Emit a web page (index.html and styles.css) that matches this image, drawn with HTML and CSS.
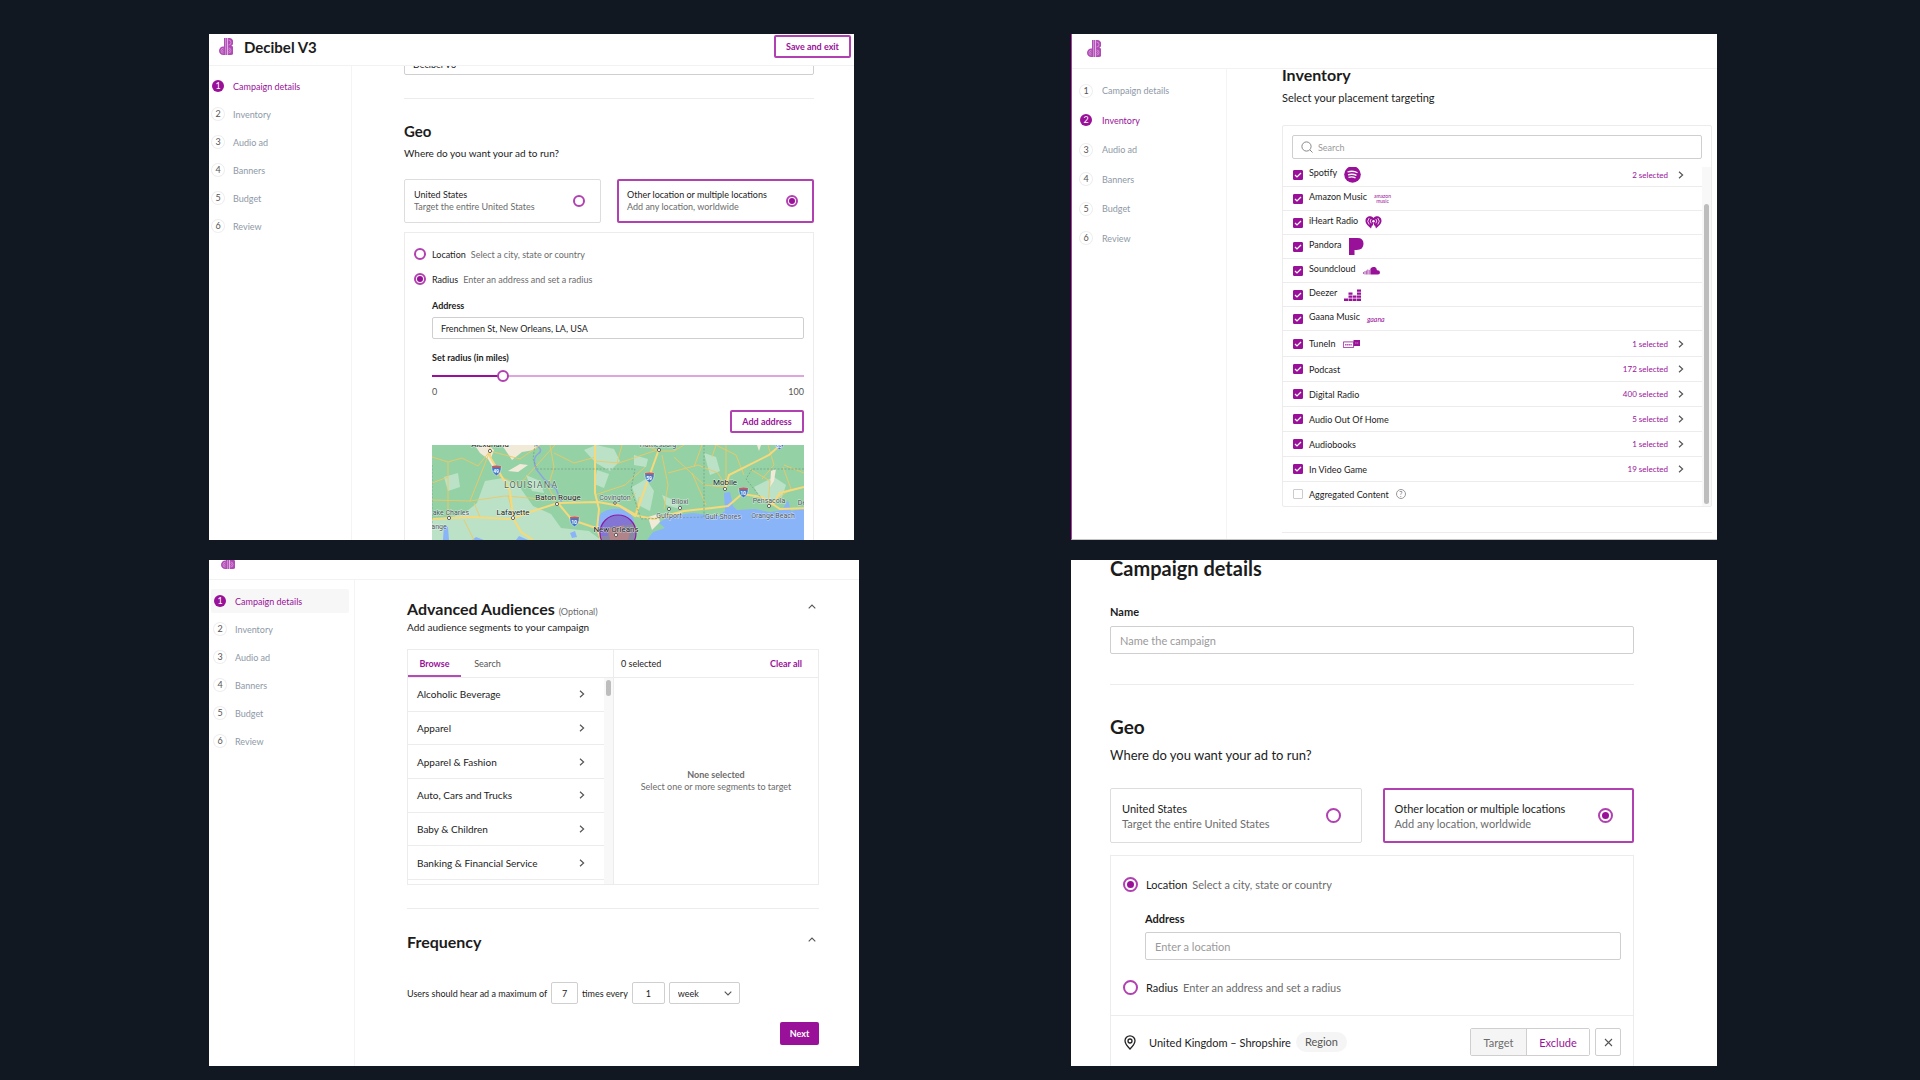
FILE: index.html
```html
<!DOCTYPE html>
<html lang="en">
<head>
<meta charset="utf-8">
<meta name="viewport" content="width=device-width, initial-scale=1">
<title>Decibel campaign builder</title>
<link rel="stylesheet" href="styles.css">
</head>
<body>
<svg class="defs" aria-hidden="true">
  <symbol id="logo" viewBox="0 0 14 17">
    <g fill="#b04bb5"><path d="M5 0h3v17H4.300A4.200 4.200 0 0 1 4.300 8.400L5 8.500z"/><path d="M8.500 0h1.200a4.200 4.200 0 0 1 2.600 7.800A4.700 4.700 0 0 1 9.700 17H8.500z"/></g>
    <g stroke="#e9c4ea" stroke-width=".5" fill="none"><path d="M6.500 0v17M8.300 0v17M4.500 10.200a2.500 2.500 0 0 0 0 5M4.500 11.700a1 1 0 0 0 0 2M9.500 2a2.200 2.200 0 0 1 0 5M9.500 10a2.500 2.500 0 0 1 0 5M9.500 11.500a1 1 0 0 1 0 2"/></g>
  </symbol>
  <symbol id="next" viewBox="0 0 6 8"><path d="M1 .8 4.600 4 1 7.200" fill="none" stroke="#555" stroke-width="1.200"/></symbol>
  <symbol id="up" viewBox="0 0 8 5"><path d="M.7 4.300 4 1l3.300 3.300" fill="none" stroke="#555" stroke-width="1.100"/></symbol>
  <symbol id="shield" viewBox="0 0 10 10"><path d="M1 1q4-1 8 0 1 6-4 8.700Q0 7 1 1" fill="#3f78c9" stroke="#fff" stroke-width=".4"/><path d="M1 1q4-1 8 0v1.200H1z" fill="#d5584e"/></symbol>
</svg>
<main class="board">

  <section class="panel panel-radius">
    <header class="top">
      <svg class="logo" role="img" aria-label="Decibel"><use href="#logo"/></svg>
      <h1 class="campaign">Decibel V3</h1>
      <button class="btn save" type="button">Save and exit</button>
    </header>
    <div class="body">
      <nav class="steps"><ol>
        <li><a class="on" href="#details"><b>1</b>Campaign details</a></li>
        <li><a href="#inventory"><b>2</b>Inventory</a></li>
        <li><a href="#audio"><b>3</b>Audio ad</a></li>
        <li><a href="#banners"><b>4</b>Banners</a></li>
        <li><a href="#budget"><b>5</b>Budget</a></li>
        <li><a href="#review"><b>6</b>Review</a></li>
      </ol></nav>
      <div class="content">
        <input class="field name" type="text" value="Decibel V3" aria-label="Campaign name">
        <hr>
        <h2>Geo</h2>
        <p class="lead">Where do you want your ad to run?</p>
        <div class="cards">
          <label class="card"><span>United States<small>Target the entire United States</small></span><input type="radio" name="geo-a"></label>
          <label class="card picked"><span>Other location or multiple locations<small>Add any location, worldwide</small></span><input type="radio" name="geo-a" checked></label>
        </div>
        <div class="geo-box">
          <label class="mode"><input type="radio" name="mode-a">Location<small>Select a city, state or country</small></label>
          <label class="mode"><input type="radio" name="mode-a" checked>Radius<small>Enter an address and set a radius</small></label>
          <div class="inner">
            <label class="cap" for="addr-a">Address</label>
            <input class="field" id="addr-a" type="text" value="Frenchmen St, New Orleans, LA, USA">
            <label class="cap cap-range" for="radius">Set radius (in miles)</label>
            <input class="range" id="radius" type="range" min="0" max="100" value="18">
            <div class="scale"><span>0</span><span>100</span></div>
            <button class="btn add" type="button">Add address</button>
            <svg class="map" viewBox="0 0 372 95" preserveAspectRatio="xMidYMin slice" role="img" aria-label="Map of the Gulf Coast around New Orleans">
              <rect width="372" height="95" fill="#94d2a5"/>
              <g fill="#bbe2c6">
                <path d="M0 75l30-5 15-12 8-22 18-3 16 8 14 20 18 8 10 14 28 3 12 9H0zM152 5l12-5 18 4 6 12-10 10-14-8zM165 25l12 4-5 14-10-4zM200 42l14-8 8 12-4 20-12-6zM272 8l12 4 4 14-10 4zM322 42l20-10 12 8-4 12-20 4zM230 50l14 6 4 8-14-4zM12 32l14-4 2 14-12 4zM94 30l14 6 4 12-12-2zM202 10l14 4-2 8-12-2z"/>
              </g>
              <g fill="#f2ead8"><path d="M44 2l12-2 6 5-3 8 8 12-4 1-7-12-8-6zM70 0h38l-6 5-12 2-10 8-4-6zM76 26l12-7 8 1-10 7zM325 0h4l-2 6zM339 26l5-2-2 12-4 6zM216 72l10-3 2 8-8 8z"/></g>
              <g fill="#8ab4f8">
                <path d="M165 76q3-11 15-12 15-2 20 7 5 8-4 9l-24 3q-8-1-7-7zM162 82l12-1 2 10h-8z"/>
                <path d="M372 95H215l6-8 12-4-6-5 10-7 24-3 25 3 7-5-1-18 6-1 3 14 4 4 18-1 15 3 12-2 6-10 3 11 14-3h9z"/>
                <path d="M11 95l1-15 4 2 1 13zM40 95l4-3 8 3zM84 95l3-4 9 4zM138 88l5-2 2 6-5 1zM310 50l2-6 2 8z"/>
              </g>
              <path d="M104 0q8 5 2 9t-2 15l8 10 12 10 6 14" fill="none" stroke="#8aa6e0" stroke-width="1.500"/>
              <g fill="none" stroke="#eec764" stroke-width=".9">
                <path d="M0 12l16 5 14-4 16 8 12-15M16 17v55M0 38l16-6M0 55l38 1 35-5 50 4M58 6L38 56M58 6l30 8 20-14M65 30l22 10 18-20 18-20M118 0l4 22-6 20 8 14M76 50l6 24M164 12l-22 6-20-10M163 16l24 2 38-13M163 50l30-10 20-18M190 0l-5 18M227 6l-15-6M227 6l15 0 10-6M230 10l6 30-4 24M242 12l30 28 20 2M236 28l30-8 20 8 8 14M262 22l8-22M294 0v42M284 0l-4 12M312 30l-8-20-20-10M318 24l20 12-2 26M336 0l6 20-12 14M352 20l20 8M337 60l22-16-8-22M32 75l10 20M48 72l-6-14M204 48l-8 8M207 52l-4 18M274 60l-14-32"/>
              </g>
              <g fill="none" stroke="#f7d97a" stroke-width="2">
                <path d="M0 74l40-2 40 2 18-7 28-9 40-1 22 4 18 10 16 3 30-8 28-3 16-2 14-12 20 3 18 12 32-1 20 3"/>
                <path d="M58 0v12l12 20 8 14 3 27 8 14 12 8M163 0v48l4 16-2 20 4 11M227 4l-10 28-14 40M293 44l4-14 40-20 16-14M126 58l14 17 24 8M183 58l20 13M340 60l8-12 24-6"/>
              </g>
              <g fill="none" stroke="#6f9b80" stroke-width=".7" stroke-dasharray="2 1.500"><path d="M103 0l-2 14 4 10h98l-4 20 10 30 63-2V0M372 24h-52l-6 10 16 20M0 20v60"/></g>
              <circle cx="186" cy="88" r="18" fill="#7a1fa0" fill-opacity=".42" stroke="#8c1aa3" stroke-width="1.200"/>
              <path d="M176 84l16-4-2 8 8-2-2 9h-18z" fill="#d9826f" opacity=".5"/>
              <g fill="#fff" stroke="#444" stroke-width=".8"><circle cx="58" cy="6" r="1.600"/><circle cx="125" cy="59" r="1.600"/><circle cx="81" cy="73" r="1.600"/><circle cx="17" cy="73" r="1.600"/><circle cx="183" cy="58" r="1.300"/><circle cx="227" cy="5" r="1.600"/><circle cx="293" cy="44" r="1.600"/><circle cx="248" cy="63" r="1.600"/><circle cx="237" cy="64" r="1.600"/><circle cx="337" cy="61" r="1.600"/><circle cx="184" cy="90" r="1.600"/></g>
              <g class="shields"><use href="#shield" x="59" y="20" width="11" height="11"/><use href="#shield" x="212" y="27" width="11" height="11"/><use href="#shield" x="342" y="-6" width="11" height="11"/><use href="#shield" x="306" y="42" width="11" height="11"/><use href="#shield" x="137" y="71" width="11" height="11"/>
                <text x="64" y="28">49</text><text x="217" y="35">59</text><text x="347" y="3">65</text><text x="311" y="50">10</text><text x="142" y="79">10</text></g>
              <g class="places"><text class="state" x="99" y="43">LOUISIANA</text><text class="city" x="58" y="2">Alexandria</text><text class="city" x="126" y="55">Baton Rouge</text><text class="city" x="81" y="70">Lafayette</text><text x="19" y="70">ake Charles</text><text x="7" y="84">ange</text><text x="183" y="55">Covington</text><text x="226" y="2">Hattiesburg</text><text class="city" x="293" y="40">Mobile</text><text x="248" y="59">Biloxi</text><text x="237" y="73">Gulfport</text><text x="291" y="74">Gulf Shores</text><text x="341" y="73">Orange Beach</text><text x="337" y="58">Pensacola</text><text x="370" y="60">De</text><text class="city" x="184" y="87">New Orleans</text></g>
            </svg>
          </div>
        </div>
      </div>
    </div>
  </section>

  <section class="panel panel-inventory">
    <header class="top"><svg class="logo" role="img" aria-label="Decibel"><use href="#logo"/></svg></header>
    <div class="body">
      <nav class="steps"><ol>
        <li><a href="#details"><b>1</b>Campaign details</a></li>
        <li><a class="on" href="#inventory"><b>2</b>Inventory</a></li>
        <li><a href="#audio"><b>3</b>Audio ad</a></li>
        <li><a href="#banners"><b>4</b>Banners</a></li>
        <li><a href="#budget"><b>5</b>Budget</a></li>
        <li><a href="#review"><b>6</b>Review</a></li>
      </ol></nav>
      <div class="content">
        <h2>Inventory</h2>
        <p class="lead">Select your placement targeting</p>
        <div class="inv-box">
          <label class="search"><svg viewBox="0 0 12 12" aria-hidden="true"><circle cx="5.500" cy="5.500" r="4.600"/><path d="M9 9l2.500 2.500"/></svg><input type="search" placeholder="Search" aria-label="Search placements"></label>
          <div class="scroller">
            <ul class="placements">
              <li class="brand"><label><input type="checkbox" checked><span>Spotify</span></label><svg width="17" height="17" viewBox="0 0 17 17"><circle cx="8.500" cy="8.500" r="8.300" fill="#991199"/><path d="M3.500 6q5.500-1.800 10 .7M4 8.800q4.500-1.400 8.500.6M4.500 11.300q4-1 7 .6" stroke="#fff" stroke-width="1.300" fill="none"/></svg><a class="count" href="#spotify">2 selected<svg width="6" height="8"><use href="#next"/></svg></a></li>
              <li class="brand"><label><input type="checkbox" checked><span>Amazon Music</span></label><span class="amazon">amazon<br>music</span></li>
              <li class="brand"><label><input type="checkbox" checked><span>iHeart Radio</span></label><svg width="17" height="13" viewBox="0 0 17 13"><path d="M8.500 2C6.500-.8.5-.4.5 5c0 3 3 5 5.500 7.500L7 9.500h3l1 3C13.500 10 16.500 8 16.500 5c0-5.400-6-5.800-8-3z" fill="#991199"/><path d="M6.200 3q-2 2 0 4.300M10.800 3q2 2 0 4.300M4.200 2q-3 3.200 0 6.500M12.800 2q3 3.200 0 6.500" stroke="#fff" stroke-width=".8" fill="none"/><circle cx="8.500" cy="5.200" r="1.200" fill="#fff"/><path d="M8 7.500h1V13H8z" fill="#fff"/></svg></li>
              <li class="brand"><label><input type="checkbox" checked><span>Pandora</span></label><svg width="15" height="17" viewBox="0 0 15 17"><path d="M0 0h8.500q6 0 6 5.800 0 6.200-7 6.200H5.500v5H0z" fill="#991199"/></svg></li>
              <li class="brand"><label><input type="checkbox" checked><span>Soundcloud</span></label><svg width="17" height="8" viewBox="0 0 17 8"><path d="M8 1q5-3 6 2.200Q17 3 17 5.500 17 7.500 15 7.500H8z" fill="#991199"/><path d="M.6 5v2M2 4v3.500M3.400 3.500v4M4.800 2.500v5M6.200 3v4.500M7.400 1.500v6" stroke="#b35ab3" stroke-width="1"/></svg></li>
              <li class="brand"><label><input type="checkbox" checked><span>Deezer</span></label><svg width="17" height="12" viewBox="0 0 17 12" fill="#991199"><path d="M0 9.500h4V12H0zM4.500 9.500h4V12h-4zM9 9.500h3.500V12H9zM13 9.500h4V12h-4zM4.500 6.500h4v2.300h-4zM9 6.500h3.500v2.300H9zM13 6.500h4v2.300h-4zM4.500 3.500h4v2.300h-4zM13 3.500h4v2.300h-4zM13 .5h4v2.300h-4z"/></svg></li>
              <li class="brand"><label><input type="checkbox" checked><span>Gaana Music</span></label><span class="gaana">gaana</span></li>
              <li class="tunein"><label><input type="checkbox" checked><span>TuneIn</span></label><svg width="17" height="8" viewBox="0 0 17 8"><path d="M.4 1.900h10.200v5.700H.4z" fill="#fff" stroke="#991199" stroke-width=".8"/><path d="M10.500 0H17v6h-6.500z" fill="#991199"/><path d="M2 4.700h7M12 3h3.500" stroke="#b35ab3" stroke-width="1.500" stroke-dasharray="1.400 .4"/></svg><a class="count" href="#tunein">1 selected<svg width="6" height="8"><use href="#next"/></svg></a></li>
              <li><label><input type="checkbox" checked><span>Podcast</span></label><a class="count" href="#podcast">172 selected<svg width="6" height="8"><use href="#next"/></svg></a></li>
              <li><label><input type="checkbox" checked><span>Digital Radio</span></label><a class="count" href="#radio">400 selected<svg width="6" height="8"><use href="#next"/></svg></a></li>
              <li><label><input type="checkbox" checked><span>Audio Out Of Home</span></label><a class="count" href="#ooh">5 selected<svg width="6" height="8"><use href="#next"/></svg></a></li>
              <li><label><input type="checkbox" checked><span>Audiobooks</span></label><a class="count" href="#audiobooks">1 selected<svg width="6" height="8"><use href="#next"/></svg></a></li>
              <li><label><input type="checkbox" checked><span>In Video Game</span></label><a class="count" href="#game">19 selected<svg width="6" height="8"><use href="#next"/></svg></a></li>
              <li><label><input type="checkbox"><span>Aggregated Content</span></label><button class="help" type="button" aria-label="About aggregated content">?</button></li>
            </ul>
            <div class="track"><i></i></div>
          </div>
        </div>
        <hr>
      </div>
    </div>
  </section>

  <section class="panel panel-audience">
    <header class="top"><svg class="logo" role="img" aria-label="Decibel"><use href="#logo"/></svg></header>
    <div class="body">
      <nav class="steps"><ol>
        <li><a class="on" href="#details"><b>1</b>Campaign details</a></li>
        <li><a href="#inventory"><b>2</b>Inventory</a></li>
        <li><a href="#audio"><b>3</b>Audio ad</a></li>
        <li><a href="#banners"><b>4</b>Banners</a></li>
        <li><a href="#budget"><b>5</b>Budget</a></li>
        <li><a href="#review"><b>6</b>Review</a></li>
      </ol></nav>
      <div class="content">
        <div class="fold"><h2>Advanced Audiences <small>(Optional)</small></h2><button type="button" aria-label="Collapse audiences"><svg width="8" height="5"><use href="#up"/></svg></button></div>
        <p class="lead">Add audience segments to your campaign</p>
        <div class="picker">
          <div class="half">
            <div class="tabs"><button class="current" type="button">Browse</button><button type="button">Search</button></div>
            <div class="scroller">
              <ul class="segments">
                <li><a href="#s1">Alcoholic Beverage<svg width="6" height="8"><use href="#next"/></svg></a></li>
                <li><a href="#s2">Apparel<svg width="6" height="8"><use href="#next"/></svg></a></li>
                <li><a href="#s3">Apparel &amp; Fashion<svg width="6" height="8"><use href="#next"/></svg></a></li>
                <li><a href="#s4">Auto, Cars and Trucks<svg width="6" height="8"><use href="#next"/></svg></a></li>
                <li><a href="#s5">Baby &amp; Children<svg width="6" height="8"><use href="#next"/></svg></a></li>
                <li><a href="#s6">Banking &amp; Financial Service<svg width="6" height="8"><use href="#next"/></svg></a></li>
              </ul>
              <div class="track"><i></i></div>
            </div>
          </div>
          <div class="half">
            <div class="tabs tally"><span>0 selected</span><button type="button">Clear all</button></div>
            <div class="empty"><strong>None selected</strong><span>Select one or more segments to target</span></div>
          </div>
        </div>
        <hr>
        <div class="fold"><h2>Frequency</h2><button type="button" aria-label="Collapse frequency"><svg width="8" height="5"><use href="#up"/></svg></button></div>
        <div class="freq">
          <label for="max">Users should hear ad a maximum of</label><input class="field max" id="max" type="text" value="7">
          <label for="every">times every</label><input class="field every" id="every" type="text" value="1">
          <span class="unit"><select class="field" aria-label="Period"><option>week</option></select><svg width="8" height="5"><use href="#up"/></svg></span>
        </div>
        <button class="btn solid" type="button">Next</button>
      </div>
    </div>
  </section>

  <section class="panel panel-location">
    <div class="content">
      <h1>Campaign details</h1>
      <label class="cap" for="name-b">Name</label>
      <input class="field" id="name-b" type="text" placeholder="Name the campaign">
      <hr>
      <h2>Geo</h2>
      <p class="lead">Where do you want your ad to run?</p>
      <div class="cards">
        <label class="card"><span>United States<small>Target the entire United States</small></span><input type="radio" name="geo-b"></label>
        <label class="card picked"><span>Other location or multiple locations<small>Add any location, worldwide</small></span><input type="radio" name="geo-b" checked></label>
      </div>
      <div class="geo-box">
        <label class="mode"><input type="radio" name="mode-b" checked>Location<small>Select a city, state or country</small></label>
        <div class="inner">
          <label class="cap" for="addr-b">Address</label>
          <input class="field" id="addr-b" type="text" placeholder="Enter a location">
        </div>
        <label class="mode"><input type="radio" name="mode-b">Radius<small>Enter an address and set a radius</small></label>
        <div class="place">
          <svg width="12" height="15" viewBox="0 0 12 15" fill="none" stroke="#222" stroke-width="1.300" aria-hidden="true"><path d="M6 14C3.500 11.500 1 9 1 5.800a5 5 0 0 1 10 0C11 9 8.500 11.500 6 14z"/><circle cx="6" cy="6" r="2"/></svg>
          <span>United Kingdom – Shropshire</span><span class="pill">Region</span>
          <div class="toggle"><button type="button">Target</button><button class="current" type="button">Exclude</button></div>
          <button class="remove" type="button" aria-label="Remove"><svg width="9" height="9" viewBox="0 0 9 9"><path d="M1 1l7 7M8 1 1 8" stroke="#555" stroke-width="1.100"/></svg></button>
        </div>
      </div>
    </div>
  </section>
</main>
</body>
</html>
```
FILE: styles.css
```css
* { box-sizing: border-box; margin: 0; padding: 0; }

:root {
  --accent: #991199;
  --accent-edge: #b140b1;
  --line: #ececec;
  --edge: #cfcfcf;
  --muted: #6c6c6c;
}

body {
  background: #111821;
  color: #1c1c1c;
  font-family: Lato, "Liberation Sans", sans-serif;
  font-size: 9px;
}

.defs { display: none; }
ul, ol { list-style: none; }
a { color: inherit; text-decoration: none; }
button, input, select { font: inherit; color: inherit; background: none; border: 0; }
small { font-size: inherit; font-weight: 400; color: var(--muted); }
hr { border: 0; height: 1px; background: var(--line); }

.board {
  display: grid;
  grid-template-columns: 650fr 646fr;
  grid-template-rows: 1fr 1fr;
  column-gap: 212px;
  row-gap: 20px;
  height: 100vh;
  padding: 34px 203px 14px 209px;
}

.panel {
  display: flex;
  flex-direction: column;
  min-width: 0;
  min-height: 0;
  overflow: hidden;
  background: #fff;
}
.panel-radius { margin-right: 5px; }
.panel-inventory { border-left: 1px solid #b53aa5; border-bottom: 1px solid #c4c4c4; }

/* Header bar */
.top {
  display: flex;
  flex: none;
  align-items: center;
  height: 32px;
  padding: 0 3px 6px 10px;
  border-bottom: 1px solid #f2f2f2;
}
.logo { width: 14px; height: 17px; }
.campaign { margin-left: 11px; font-size: 15px; line-height: 20px; }
.save { margin-left: auto; width: 77px; }
.panel-inventory .top { height: 35px; padding: 0 0 6px 15px; }
.panel-audience .top { height: 20px; padding: 0 12px; align-items: flex-end; padding-bottom: 10px; }

.btn {
  height: 23px;
  border: 2px solid var(--accent-edge);
  border-radius: 2px;
  color: var(--accent);
  font-weight: 700;
}

/* Step list */
.body { display: flex; flex: 1; min-height: 0; overflow: hidden; }
.steps { flex: none; width: 143px; padding-top: 6px; border-right: 1px solid #f4f4f4; }
.steps li { display: flex; align-items: center; height: 28px; }
.steps a { display: flex; flex: 1; align-items: center; height: 24px; padding-left: 3px; color: #8e99a6; }
.steps b {
  width: 12px;
  height: 12px;
  margin-right: 9px;
  border-radius: 50%;
  box-shadow: 0 0 0 1px #eee;
  color: #555;
  font-weight: 400;
  line-height: 12px;
  text-align: center;
}
.steps .on { color: var(--accent); }
.steps .on b { background: var(--accent); box-shadow: none; color: #fff; }
.panel-inventory .steps { width: 155px; padding-top: 7px; }
.panel-inventory .steps ol { display: grid; grid-auto-rows: 1fr; height: 177px; }
.panel-inventory .steps li { height: auto; }
.panel-inventory .steps a { padding-left: 8px; }
.panel-inventory .steps b { margin-right: 10px; }
.panel-audience .steps { width: 146px; padding: 7px 5px 0 2px; }
.panel-audience .steps .on { background: #f7f7f7; border-radius: 2px; }

/* Content shared by the panels */
.content { display: flex; flex: 1; flex-direction: column; min-width: 0; padding: 0 40px 0 52px; }
.content > * { flex: none; }
h2 { font-size: 15px; line-height: 20px; }
.lead { font-size: 10px; line-height: 14px; }
.field {
  width: 100%;
  height: 22px;
  padding: 0 8px;
  border: 1px solid var(--edge);
  border-radius: 2px;
}
.cap { display: block; font-weight: 700; line-height: 12px; }
::placeholder { color: #9a9a9a; opacity: 1; }

input[type="radio"] {
  flex: none;
  width: 12px;
  height: 12px;
  appearance: none;
  border: 2px solid var(--accent-edge);
  border-radius: 50%;
}
input[type="radio"]:checked { background: var(--accent); background-clip: content-box; padding: 1px; }

.cards { display: grid; grid-template-columns: 1fr 1fr; gap: 16px; }
.card {
  display: flex;
  align-items: center;
  justify-content: space-between;
  height: 44px;
  padding: 0 15px 0 9px;
  border: 1px solid #ddd;
  border-radius: 2px;
  line-height: 12px;
}
.card small { display: block; }
.picked { border: 2px solid var(--accent-edge); padding: 0 14px 0 8px; }
.geo-box { border: 1px solid var(--line); }
.mode { display: flex; align-items: center; height: 14px; padding-left: 9px; }
.mode input { margin-right: 6px; }
.mode small { margin-left: 5px; }

/* Radius targeting */
.name { margin-top: -13px; }
.panel-radius hr { margin: 23px 0 22px; }
.panel-radius .lead { margin: 5px 0 19px; }
.panel-radius .geo-box { height: 400px; margin-top: 9px; padding-top: 14px; }
.panel-radius .mode + .mode { margin-top: 11px; }
.panel-radius .inner { display: flex; flex-direction: column; padding: 14px 9px 0 27px; }
.panel-radius .inner .field { margin-top: 5px; }
.cap-range { margin-top: 13px; }
.range {
  width: 100%;
  height: 12px;
  margin-top: 6px;
  appearance: none;
  background: linear-gradient(90deg, var(--accent) 19%, #dda6dd 19%) center / 100% 2px no-repeat;
}
.range::-webkit-slider-thumb {
  width: 12px;
  height: 12px;
  appearance: none;
  background: #fff;
  border: 2px solid var(--accent-edge);
  border-radius: 50%;
}
.scale { display: flex; justify-content: space-between; margin-top: 4px; line-height: 12px; color: #555; }
.add { align-self: flex-end; width: 74px; margin: 12px 0; }
.map { display: block; width: 100%; height: 95px; }
.places { fill: #4a5560; stroke: #fff; stroke-width: 1px; stroke-opacity: .6; paint-order: stroke; font: 7px Roboto, sans-serif; text-anchor: middle; }
.places .city { fill: #222; font-size: 8px; }
.places .state { fill: #4f6a5c; font-size: 9px; letter-spacing: 1px; }
.shields { fill: #fff; font: 700 5px Roboto, sans-serif; text-anchor: middle; }

/* Inventory */
.panel-inventory .content { padding: 0 5px 0 55px; }
.panel-inventory h2 { margin-top: -5px; font-size: 16px; line-height: 22px; }
.panel-inventory .lead { margin: 5px 0 20px; font-size: 11px; }
.inv-box { border: 1px solid var(--line); border-radius: 2px; }
.search {
  display: flex;
  align-items: center;
  gap: 5px;
  height: 24px;
  margin: 9px 9px 8px;
  padding: 0 8px;
  border: 1px solid var(--edge);
  border-radius: 2px;
}
.search svg { width: 12px; height: 12px; fill: none; stroke: #888; }
.search input { flex: 1; }
.scroller { display: flex; overflow: hidden; }
.scroller ul { flex: 1; }
.track { flex: none; width: 9px; padding: 0 2px; background: #f8f8f8; }
.track i { display: block; width: 5px; height: 300px; margin-top: 37px; background: #bdbdbd; border-radius: 3px; }
.placements li { display: flex; align-items: center; height: 25px; padding: 0 18px 0 10px; border-bottom: 1px solid var(--line); }
.placements li:first-child { margin-top: -4px; }
.placements li:last-child, .placements .brand { height: 24px; }
.placements .tunein { height: 26px; }
.placements li:last-child { border-bottom: 0; }
.placements label { display: flex; align-items: center; margin-right: 7px; }
.brand label span { padding-bottom: 4px; }
.placements input {
  width: 10px;
  height: 10px;
  margin-right: 6px;
  appearance: none;
  border: 1px solid #ccc;
  border-radius: 1px;
}
.placements input:checked {
  border-color: var(--accent);
  background: var(--accent) url("data:image/svg+xml,%3Csvg xmlns='http://www.w3.org/2000/svg' viewBox='0 0 8 8'%3E%3Cpath d='M1 4l2 2 4-4' fill='none' stroke='white' stroke-width='1.2'/%3E%3C/svg%3E") center / 8px 8px no-repeat;
}
.count { display: flex; align-items: center; gap: 10px; margin-left: auto; color: var(--accent); font-size: 8px; }
.amazon, .gaana { color: var(--accent); text-align: center; }
.amazon { font-size: 5px; line-height: 5px; }
.gaana { font-size: 7px; font-style: italic; }
.help { width: 10px; height: 10px; border: 1px solid #999; border-radius: 50%; color: #777; font-size: 7px; line-height: 8px; }
.panel-inventory hr { margin-top: 25px; }

/* Audiences */
.panel-audience .content { padding: 0 40px 0 52px; }
.fold { display: flex; align-items: center; justify-content: space-between; height: 20px; margin-top: 19px; padding-right: 3px; }
.fold button { display: flex; padding-bottom: 6px; }
.fold h2 { font-size: 16px; }
.fold small { font-size: 9px; line-height: 9px; }
.panel-audience .lead { margin: 1px 0 15px; }
.picker { display: grid; grid-template-columns: 1fr 1fr; height: 236px; border: 1px solid var(--line); }
.half { display: flex; flex-direction: column; min-height: 0; }
.half + .half { border-left: 1px solid var(--line); }
.tabs { display: flex; flex: none; height: 28px; border-bottom: 1px solid var(--line); color: #555; }
.tabs button { width: 53px; }
.tabs .current { border-bottom: 2px solid #b54bb5; color: var(--accent); font-weight: 700; padding-top: 2px; }
.tally { align-items: center; justify-content: space-between; padding: 0 16px 0 7px; color: #1c1c1c; }
.tally button { width: auto; color: var(--accent); font-weight: 700; }
.half .scroller { flex: 1; }
.segments { display: grid; grid-auto-rows: 1fr; height: 202px; font-size: 10px; }
.segments li { display: grid; border-bottom: 1px solid var(--line); }
.segments a { display: flex; align-items: center; justify-content: space-between; padding: 0 19px 0 9px; }
.half .track i { height: 16px; margin-top: 2px; }
.empty { display: flex; flex: 1; flex-direction: column; align-items: center; justify-content: center; line-height: 12px; color: var(--muted); }
.panel-audience hr { margin: 23px 0 4px; }
.freq { display: flex; align-items: center; gap: 4px; margin: 30px 0 18px; }
.freq .max { width: 27px; text-align: center; padding: 0; }
.freq .every { width: 33px; text-align: center; padding: 0; }
.unit { display: grid; width: 71px; align-items: center; }
.unit > * { grid-area: 1 / 1; }
.unit select { appearance: none; }
.unit svg { justify-self: end; margin-right: 8px; rotate: 180deg; pointer-events: none; }
.solid { align-self: flex-end; width: 39px; border: 0; background: var(--accent); color: #fff; }

/* Location targeting, shown at a larger scale */
.panel-location { font-size: 11px; }
.panel-location .content { padding: 0 83px 0 39px; }
.panel-location h1 { margin-top: -5px; font-size: 20px; line-height: 26px; }
.panel-location .cap { line-height: 14px; }
.panel-location h1 + .cap { margin-top: 24px; }
.panel-location .field { height: 28px; margin-top: 7px; padding: 0 9px; }
.panel-location hr { margin: 30px 0; }
.panel-location h2 { font-size: 19px; line-height: 24px; }
.panel-location .lead { margin: 7px 0 24px; font-size: 13px; line-height: 18px; }
.panel-location .cards { gap: 21px; }
.panel-location .card { height: 55px; padding: 0 20px 0 11px; line-height: 15px; }
.panel-location .picked { padding: 0 19px 0 10px; }
.panel-location input[type="radio"] { width: 15px; height: 15px; }
.panel-location input[type="radio"]:checked { padding: 2px; }
.panel-location .geo-box { height: 300px; margin-top: 12px; padding-top: 19px; }
.panel-location .mode { height: 18px; padding-left: 12px; }
.panel-location .mode input { margin-right: 8px; }
.panel-location .inner { padding: 19px 12px 18px 34px; }
.panel-location .inner .field { margin-top: 6px; }
.place { display: flex; align-items: center; margin-top: 19px; padding: 12px 12px 0 13px; border-top: 1px solid var(--line); }
.place > span:first-of-type { margin-left: 13px; }
.place .pill { margin-left: 5px; padding: 0 9px; border-radius: 10px; background: #f5f5f5; color: #555; line-height: 20px; }
.toggle { display: flex; height: 28px; margin-left: auto; border: 1px solid var(--edge); border-radius: 2px; }
.toggle button { width: 55px; background: #f5f5f5; color: var(--muted); }
.toggle .current { width: 63px; border-left: 1px solid var(--edge); background: #fff; color: var(--accent); }
.remove { display: grid; place-items: center; width: 26px; height: 28px; margin-left: 5px; border: 1px solid var(--edge); border-radius: 2px; }
```
